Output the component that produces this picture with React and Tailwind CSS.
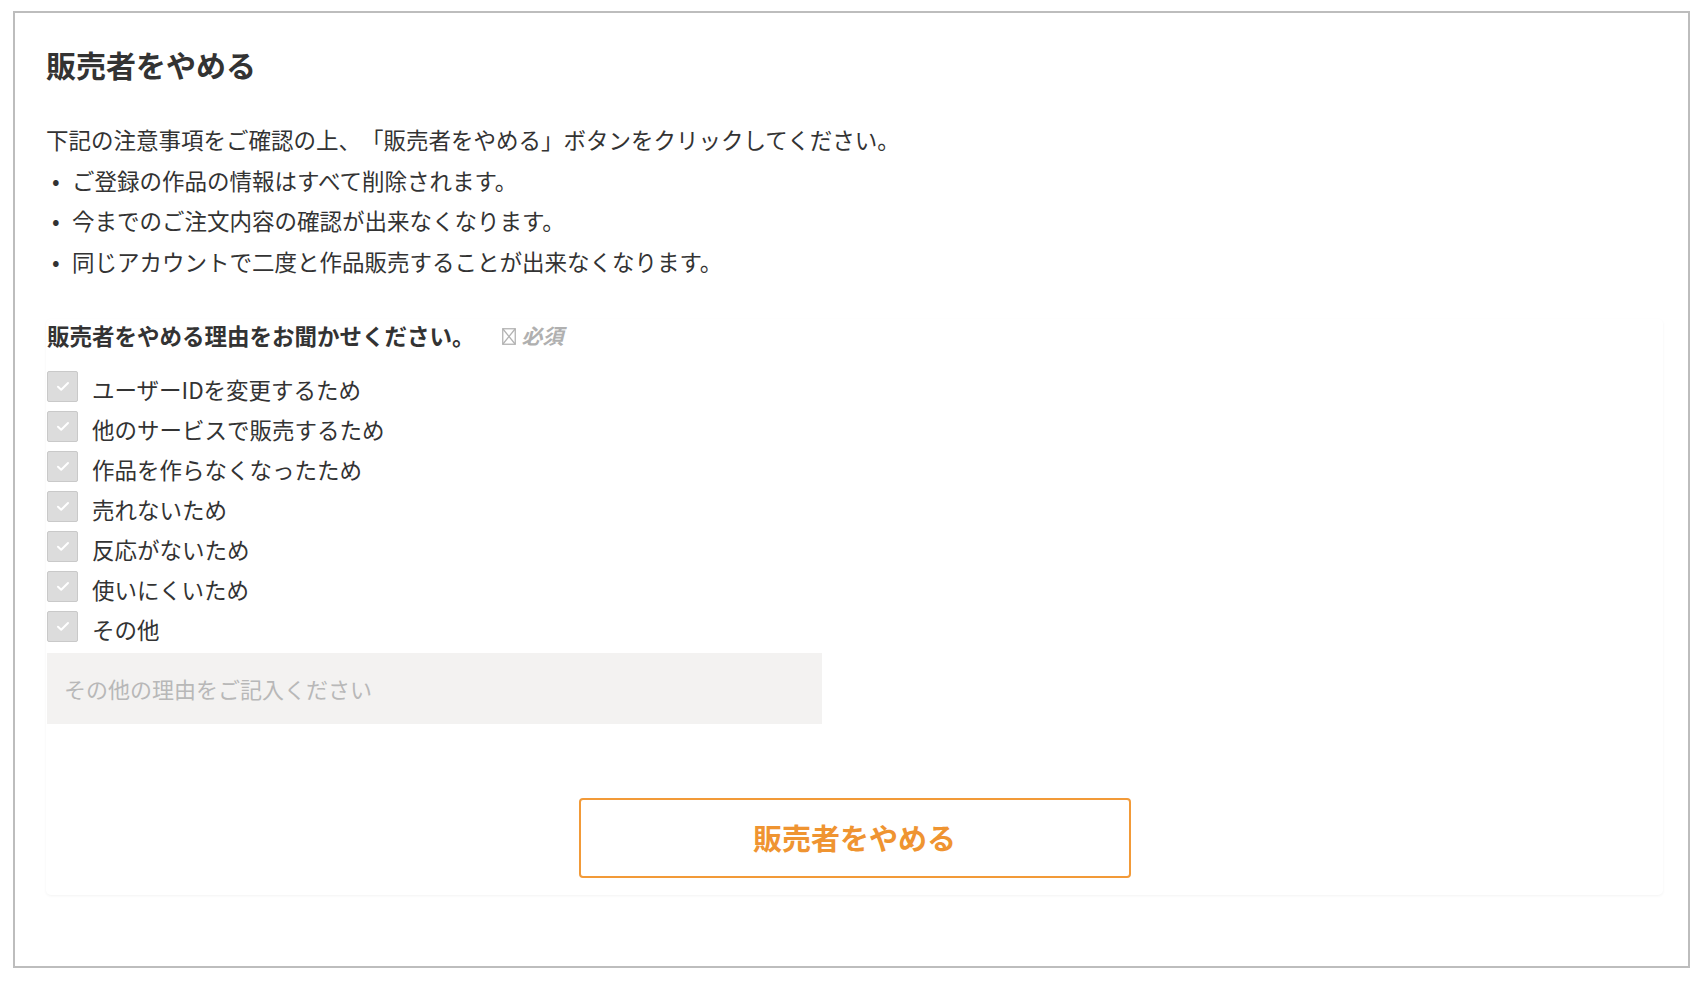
const reasons = [
  'ユーザーIDを変更するため',
  '他のサービスで販売するため',
  '作品を作らなくなったため',
  '売れないため',
  '反応がないため',
  '使いにくいため',
  'その他',
];

const notes = [
  'ご登録の作品の情報はすべて削除されます。',
  '今までのご注文内容の確認が出来なくなります。',
  '同じアカウントで二度と作品販売することが出来なくなります。',
];

const font = { fontFamily: '"Noto Sans CJK JP", "Noto Sans", sans-serif' };

const CheckBox = () => (
  <span className="flex h-[31px] w-[31px] shrink-0 items-center justify-center rounded-[2px] border border-[#c9c9c9] bg-[#dcdcdc]">
    <svg width="14" height="11" viewBox="0 0 14 11" fill="none">
      <path d="M2 5.8 5.2 8.8 12 2" stroke="#ffffff" strokeWidth="2" strokeLinecap="round" strokeLinejoin="round" />
    </svg>
  </span>
);

const RequiredMark = () => (
  <span className="ml-[27px] flex items-center gap-[6px] text-[21px] font-bold italic text-[#b0b0b0]">
    <svg className="shrink-0" width="14" height="17" viewBox="0 0 14 17" fill="none">
      <rect x="0.75" y="0.75" width="12.5" height="15.5" stroke="#b3b3b3" strokeWidth="1.3" />
      <path d="M0.75 0.75 13.25 16.25 M13.25 0.75 0.75 16.25" stroke="#b3b3b3" strokeWidth="1.3" />
    </svg>
    必須
  </span>
);

export default function App() {
  return (
    <div className="min-h-screen bg-white pl-[13px] pt-[11px] text-[#333] [text-spacing-trim:space-all]" style={font}>
      <div className="h-[957px] w-[1677px] border-2 border-[#bdbdbd] pl-[31px] pr-[25px] pt-[31px]">
        <h1 className="text-[30px] font-bold leading-[40px] text-[#333]">販売者をやめる</h1>

        <div className="mt-[35px] text-[22.5px] leading-[40.5px]">
          <p>下記の注意事項をご確認の上、「販売者をやめる」ボタンをクリックしてください。</p>
          <ul>
            {notes.map((n) => (
              <li key={n} className="flex">
                <span className="w-[26px] pl-[6px]">•</span>
                <span>{n}</span>
              </li>
            ))}
          </ul>
        </div>

        <section className="mt-[38px] rounded-[5px] pb-[17px] shadow-[0_1px_3px_rgba(0,0,0,0.05)]">
          <div className="flex h-[34px] items-center pl-[1px]">
            <h2 className="text-[22.5px] font-bold">販売者をやめる理由をお聞かせください。</h2>
            <RequiredMark />
          </div>

          <div className="mt-[13px] pl-[1px]">
            {reasons.map((r) => (
              <label key={r} className="flex h-[40px] items-center gap-[14px]">
                <CheckBox />
                <span className="pt-[5px] text-[22.5px] leading-[30px]">{r}</span>
              </label>
            ))}
          </div>

          <textarea
            className="ml-[1px] mt-[7px] block h-[71px] w-[775px] resize-none bg-[#f3f2f1] px-[17px] pt-[20px] text-[22px] leading-[30px] outline-none placeholder:text-[#b8b8b8]"
            placeholder="その他の理由をご記入ください"
          />

          <div className="mt-[74px] flex justify-center">
            <button className="h-[80px] w-[552px] rounded-[4px] border-2 border-[#f29a38] bg-white text-[29px] font-bold text-[#ef9431]">
              販売者をやめる
            </button>
          </div>
        </section>
      </div>
    </div>
  );
}
